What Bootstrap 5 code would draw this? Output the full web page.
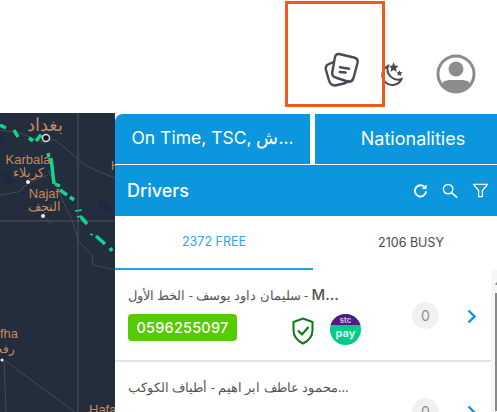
<!DOCTYPE html>
<html lang="en">
<head>
    <meta charset="UTF-8">
    <meta name="viewport" content="width=device-width, initial-scale=1.0">
    <title>Drivers</title>
    <link href="https://cdn.jsdelivr.net/npm/bootstrap@5.3.0/dist/css/bootstrap.min.css" rel="stylesheet">
    <style>
        body { width: 497px; height: 412px; overflow: hidden; font-family: Inter, "Noto Sans", "Liberation Sans", sans-serif; background: #fff; }
        .top-bar { height: 113px; padding-right: 21px; padding-top: 54px; }
        .hint-box { position: absolute; left: 285px; top: 1px; width: 100px; height: 106px; border: 3px solid #f4581a; }
        .notes-icon { margin-right: 21px; margin-top: -2px; }
        .moon-icon { margin-top: 8px; margin-right: 33px; }
        .main-area { height: 299px; }
        .map-area { width: 115px; flex: none; background: #232d3b; }
        .map-area text { font-family: "Liberation Sans", "Noto Sans", sans-serif; fill: #c4895f; }
        .side-panel { width: 382px; flex: none; overflow: hidden; }
        .head-tabs { gap: 5px; height: 52px; padding: 1px 0; }
        .head-tab { background: #0c96dd; color: #fff; font-size: 18px; height: 50px; flex: none; padding-bottom: 1px; }
        .head-tab.first { width: 195px; border-top-left-radius: 8px; font-size: 17.5px; }
        .head-tab.second { width: 196px; }
        .drivers-bar { background: #0c96dd; color: #fff; height: 51px; padding: 0 8px 0 12px; font-size: 18px; font-weight: 500; }
        .bar-icons { gap: 14px; }
        .free-busy { height: 54px; }
        .fb-tab { font-size: 12.5px; padding-top: 1px; }
        .fb-tab.free { width: 198px; color: #2ba6f0; border-bottom: 2px solid #14a7f2; }
        .fb-tab.busy { width: 184px; color: #4a4a4a; padding-left: 12px; }
        .driver-list { width: 376px; height: 142px; overflow: hidden; }
        .driver-row { height: 92px; border-bottom: 2px solid #e2e2e2; padding: 14px 0 0 13px; }
        .driver-name { font-size: 12.8px; color: #555; width: 240px; white-space: nowrap; text-align: left; font-family: "Noto Sans", "Liberation Sans", sans-serif; line-height: 22px; }
        .driver-name bdi { font-family: Inter, sans-serif; font-weight: 500; font-size: 15px; }
        .phone-pill { background: #55cb00; color: #fff; width: 109px; height: 27px; border-radius: 4px; font-size: 14.5px; font-weight: 500; letter-spacing: .2px; }
        .row-badges { margin-top: 8px; }
        .shield-icon { margin-left: 55px; margin-top: 3px; }
        .pay-icon { margin-left: 16px; }
        .count-dot { position: absolute; left: 284px; width: 27px; height: 27px; background: #f1f1f1; border-radius: 50%; color: #8a8f99; font-size: 14px; }
        .chevron-icon { position: absolute; left: 339px; }
        .scroll-strip { width: 6px; background: #f6f6f6; padding-left: 4px; }
        .scroll-arrow { margin-top: 10px; width: 0; height: 0; border-left: 3px solid transparent; border-right: 3px solid transparent; border-bottom: 5px solid #8a8a8a; }
        .scroll-thumb { margin-top: 8px; height: 118px; background: #8a8a8a; }
        .row-inner { position: relative; }
        .count-dot.one { top: 18px; }
        .chevron-icon.one { top: 25px; }
        .count-dot.two { top: 22px; }
        .chevron-icon.two { top: 29px; }
    </style>
</head>
<body>
    <div class="top-bar d-flex justify-content-end align-items-start">
        <svg class="notes-icon" width="36" height="36" viewBox="0 0 36 36" fill="none" stroke="#4a4a55" stroke-width="2.4" stroke-linejoin="round" stroke-linecap="round">
            <path d="M9.5 10 L4 12.5 Q1 14 2 18 L5 28.5 Q6.5 33.5 11 33.5 L20 31.5 Q23 30.8 24.5 29"/>
            <path d="M15 2 L30 5.5 Q34.5 6.5 33.5 11 L29.5 26 Q28 30.5 23.5 29.5 L11.5 25.5 Q7.5 24 8.3 20 L11 5 Q12 1.5 15 2 Z"/>
            <path d="M16 15.3 L25 16.7 M15.7 20 L21.7 20.5"/>
        </svg>
        <svg class="moon-icon" width="22" height="25" viewBox="0 0 22 25">
            <path d="M7 4 A10 10 0 1 0 20.5 17 A10.5 10.5 0 0 1 7 4 Z" fill="none" stroke="#4a4a55" stroke-width="2"/>
            <path d="M12.5 0 L14 3.5 L17.5 4 L15 6.3 L15.7 10 L12.5 8 L9.5 10 L10.3 6.3 L8 4 L11.3 3.5 Z" fill="#4a4a55"/>
            <path d="M18.5 8 L19.3 10 L21.5 10.3 L20 11.7 L20.3 14 L18.5 13 L16.7 14 L17 11.7 L15.5 10.3 L17.7 10 Z" fill="#4a4a55"/>
        </svg>
        <svg width="40" height="40" viewBox="0 0 40 40">
            <defs><clipPath id="avatarClip"><circle cx="20" cy="20" r="17"/></clipPath></defs>
            <circle cx="20" cy="20" r="18" fill="#fff" stroke="#8c8c8c" stroke-width="3"/>
            <circle cx="20" cy="15" r="7.5" fill="#8c8c8c"/>
            <path d="M5 38 V32 Q6 26 14 26 H26 Q34 26 35 32 V38 Z" fill="#8c8c8c" clip-path="url(#avatarClip)"/>
        </svg>
    </div>
    <div class="hint-box"></div>

    <div class="main-area d-flex">
        <div class="map-area">
            <svg width="115" height="299" viewBox="0 113 115 299">
                <g fill="none" stroke="#4d545e" stroke-width="1">
                    <path d="M78 113 V412"/>
                    <path d="M0 221 H115"/>
                </g>
                <g fill="none" stroke="#454a50" stroke-width="1">
                    <path d="M46 140 L55 140 L70 152 L85 165 L100 172 L115 178"/>
                    <path d="M48 170 L60 195 L72 220 L78 240 L92 255 L93 265 L115 270"/>
                    <path d="M0 195 L18 192 L30 182 L48 175"/>
                    <path d="M4 360 L75 412"/>
                    <path d="M4 360 L6 412"/>
                    <path d="M0 130 L20 133 L45 143"/>
                    <path d="M43 216 L52 224"/>
                </g>
                <g fill="#1a2a42">
                    <path d="M0 172 L8 171 L13 182 L6 187 Z"/>
                    <path d="M97 198 L110 205 L112 214 L100 210 Z"/>
                    <path d="M0 137 L6 140 L3 147 L0 146 Z"/>
                </g>
                <g fill="none" stroke="#0fd58f" stroke-width="3.5">
                    <path d="M0 125 L6 128"/>
                    <path d="M14 130 L18 137"/>
                    <path d="M29 138 L33 141"/>
                    <path d="M36 141 L40 136 L42 137"/>
                    <path d="M48 153 L49 157"/>
                    <path d="M51 158 L54 184"/>
                    <path d="M55 184 L60 186"/>
                    <path d="M60 190 L67 195"/>
                    <path d="M70 197 L74 200"/>
                    <path d="M81 217 L87 224"/>
                    <path d="M96 236 L105 244"/>
                    <path d="M110 248 L112 251"/>
                </g>
                <g fill="none" stroke="#0fd58f" stroke-width="1.5">
                    <path d="M75 211 L82 210"/>
                    <path d="M77 217 L82 216"/>
                    <path d="M90 234 L93 235"/>
                </g>
                <circle cx="46" cy="138" r="3.5" fill="#111" stroke="#ddd" stroke-width="1.5"/>
                <circle cx="28" cy="182" r="2" fill="#eee"/>
                <circle cx="43" cy="216" r="2" fill="#eee"/>
                <circle cx="2" cy="360" r="1.5" fill="#eee"/>
                <text x="45" y="131" font-size="18" text-anchor="middle">بغداد</text>
                <text x="28" y="164" font-size="13" text-anchor="middle">Karbala</text>
                <text x="28" y="177" font-size="12.5" text-anchor="middle">كربلاء</text>
                <text x="44" y="198" font-size="13" text-anchor="middle">Najaf</text>
                <text x="44" y="211" font-size="12.5" text-anchor="middle">النجف</text>
                <text x="18" y="338" font-size="13" text-anchor="end">fha</text>
                <text x="15" y="353" font-size="12" text-anchor="end">رفحا</text>
                <text x="89" y="414" font-size="13">Hafar</text>
                <text x="111" y="170" font-size="12">H</text>
            </svg>
        </div>

        <div class="side-panel">
            <div class="head-tabs d-flex">
                <div class="head-tab first d-flex align-items-center justify-content-center">On Time, TSC, ش...</div>
                <div class="head-tab second d-flex align-items-center justify-content-center">Nationalities</div>
            </div>
            <div class="drivers-bar d-flex align-items-center justify-content-between">
                <span>Drivers</span>
                <div class="bar-icons d-flex align-items-center">
                    <svg width="15" height="15" viewBox="0 0 16 16" fill="none" stroke="#fff" stroke-width="2">
                        <path d="M13 5 A6 6 0 1 0 14 9"/>
                        <path d="M14.5 1.5 V6.5 H9.5 Z" fill="#fff" stroke="none"/>
                    </svg>
                    <svg width="16" height="16" viewBox="0 0 17 17" fill="none" stroke="#fff" stroke-width="1.6">
                        <circle cx="6.5" cy="6.5" r="5"/>
                        <path d="M10.5 10.5 L16 15.5"/>
                    </svg>
                    <svg width="17" height="15" viewBox="0 0 17 16" fill="none" stroke="#fff" stroke-width="1.4" stroke-linejoin="round">
                        <path d="M1 1.5 H16 L10.5 8 V14.5 H6.5 V8 Z"/>
                    </svg>
                </div>
            </div>
            <div class="free-busy d-flex">
                <div class="fb-tab free d-flex align-items-center justify-content-center">2372 FREE</div>
                <div class="fb-tab busy d-flex align-items-center justify-content-center">2106 BUSY</div>
            </div>
            <div class="d-flex">
                <div class="driver-list">
                    <div class="driver-row">
                        <div class="row-inner">
                            <div class="driver-name" dir="rtl"><bdi>M...</bdi> - سليمان داود يوسف - الخط الأول</div>
                            <div class="row-badges d-flex align-items-start">
                                <div class="phone-pill d-flex align-items-center justify-content-center">0596255097</div>
                                <svg class="shield-icon" width="22" height="28" viewBox="0 0 22 28" fill="none" stroke="#0b7a12" stroke-width="2">
                                    <path d="M11 1.5 L20.5 5 V13 Q20.5 22 11 26.5 Q1.5 22 1.5 13 V5 Z"/>
                                    <path d="M6 13.5 L10 17.5 L16.5 10" stroke-width="2.2"/>
                                </svg>
                                <svg class="pay-icon" width="31" height="31" viewBox="0 0 31 31">
                                    <defs><clipPath id="payClip"><circle cx="15.5" cy="15.5" r="15.5"/></clipPath></defs>
                                    <circle cx="15.5" cy="15.5" r="15.5" fill="#06c98c"/>
                                    <rect width="31" height="11" fill="#53198a" clip-path="url(#payClip)"/>
                                    <text x="15.5" y="8.5" font-size="7.5" font-weight="700" fill="#cfc4e0" text-anchor="middle" font-family="Inter, sans-serif">stc</text>
                                    <text x="15.5" y="23" font-size="11" font-weight="700" fill="#d6f7ea" text-anchor="middle" font-family="Inter, sans-serif">pay</text>
                                </svg>
                            </div>
                            <div class="count-dot one d-flex align-items-center justify-content-center">0</div>
                            <svg class="chevron-icon one" width="9" height="15" viewBox="0 0 9 15" fill="none" stroke="#0d92ee" stroke-width="2.4"><path d="M1.5 1.5 L7.5 7.5 L1.5 13.5"/></svg>
                        </div>
                    </div>
                    <div class="driver-row">
                        <div class="row-inner">
                            <div class="driver-name" dir="ltr">محمود عاطف ابر اهيم - أطياف الكوكب...</div>
                            <div class="count-dot two d-flex align-items-center justify-content-center">0</div>
                            <svg class="chevron-icon two" width="9" height="15" viewBox="0 0 9 15" fill="none" stroke="#0d92ee" stroke-width="2.4"><path d="M1.5 1.5 L7.5 7.5 L1.5 13.5"/></svg>
                        </div>
                    </div>
                </div>
                <div class="scroll-strip">
                    <div class="scroll-arrow"></div>
                    <div class="scroll-thumb"></div>
                </div>
            </div>
        </div>
    </div>
    <script src="https://cdn.jsdelivr.net/npm/bootstrap@5.3.0/dist/js/bootstrap.bundle.min.js"></script>
</body>
</html>
